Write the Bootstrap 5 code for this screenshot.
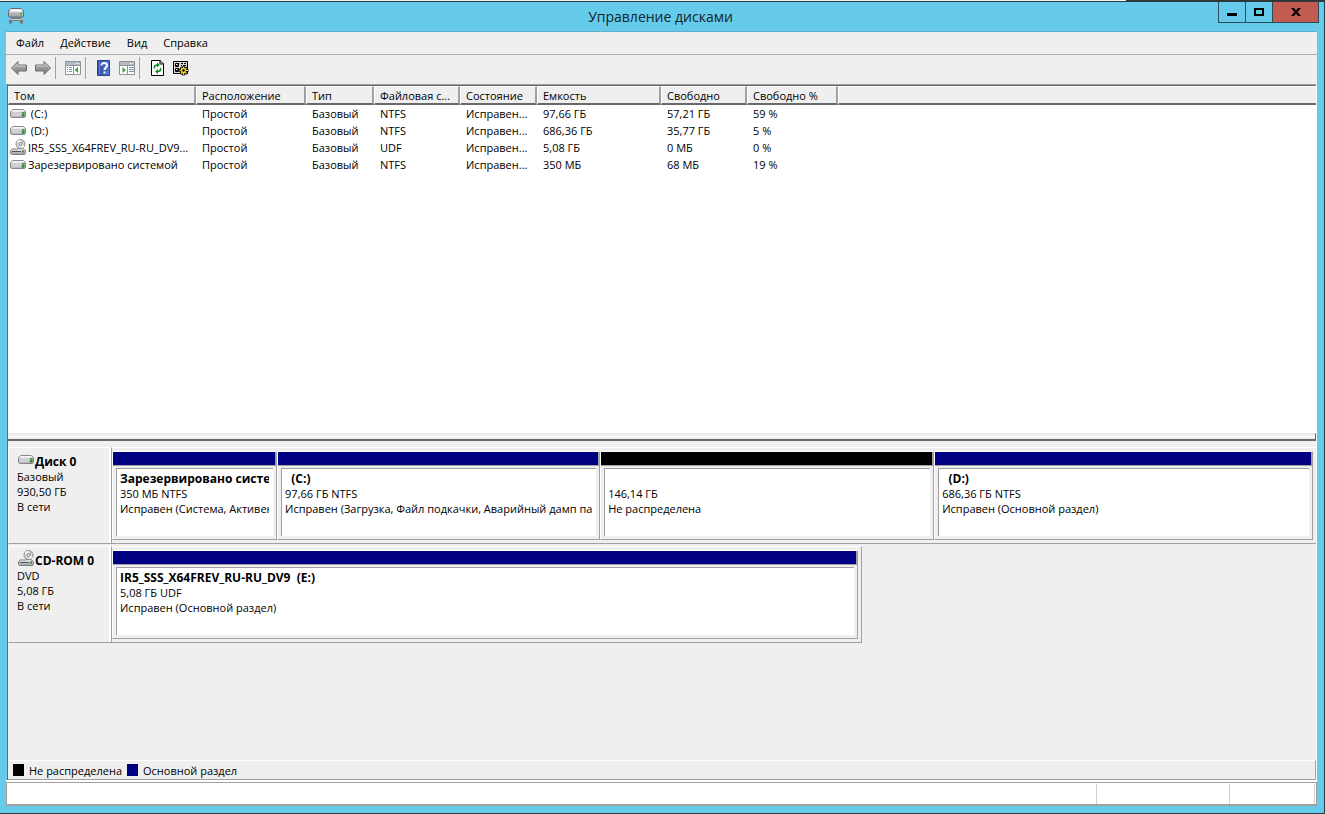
<!DOCTYPE html>
<html lang="ru">
<head>
<meta charset="utf-8">
<meta name="viewport" content="width=device-width, initial-scale=1">
<title>Управление дисками</title>
<link rel="stylesheet" href="https://cdn.jsdelivr.net/npm/bootstrap@5.3.0/dist/css/bootstrap.min.css">
<style>
  :root { --frame: #66cbea; --face: #efefef; --shade: #a0a0a0; --dark: #696969; --navy: #000080; }
  body { font-family: "Open Sans", "Noto Sans", sans-serif; font-size: 11px; line-height: 15px; color: #000; background: #f4f4f4; }
  button { font: inherit; color: inherit; background: none; border: 0; padding: 0; }
  .desktop-edge { height: 1px; background: linear-gradient(90deg, #f4f4f4 85%, #333 85%); }
  .app-window { background: var(--frame); border: 1px solid #2b3b42; border-left: 0; padding: 0 7px 7px 6px; }
  .title-bar { height: 30px; border-bottom: 1px solid #5fb0d0; }
  .title-bar h1 { font-size: 14px; line-height: 30px; padding-left: 77px; color: #10242c; }
  .title-icon { width: 20px; height: 28px; }
  .caption-group { margin-right: -2px; }
  .caption-btn { height: 21px; width: 27px; border: solid #2b4c58; border-width: 0 0 1px 1px; }
  .caption-close { width: 47px; border-right-width: 1px; background: #c25b50; }
  .menu-bar { height: 23px; background: var(--face); border-bottom: 1px solid #a9adb1; padding: 0 0 1px 2px; }
  .menu-bar button { padding: 0 8px; }
  .tool-bar { height: 29px; background: var(--face); padding: 0 0 4px 1px; }
  .tool-bar button { width: 24px; height: 24px; }
  .tool-bar .sep { width: 6px; height: 22px; border-left: 1px solid var(--shade); }
  .panes { background: var(--face); border-left: 1px solid var(--dark); border-right: 1px solid #fff; margin-left: 1px; min-height: 0; }
  .volume-pane { flex: 356 1 0; background: #fff; border-top: 1px solid var(--shade); overflow: hidden; }
  .volume-table { table-layout: fixed; width: 100%; border-collapse: separate; border-spacing: 0; border-top: 1px solid var(--dark); }
  .volume-table th { height: 18px; padding: 1px 5px 0; background: var(--face); font-weight: 400; text-align: left; border: solid; border-width: 1px 2px 2px 1px; border-color: #fff var(--shade) var(--dark) #fff; line-height: 15px; }
  .volume-table th:last-child { border-right: 0; }
  .volume-table td { height: 17px; padding: 0 6px; line-height: 17px; }
  .volume-table td:first-child { padding: 0 2px; }
  .volume-table th, .volume-table td { overflow: hidden; white-space: pre; text-overflow: ellipsis; }
  .c-vol { width: 188px } .c-loc { width: 110px } .c-type { width: 68px } .c-fs { width: 86px }
  .c-state { width: 77px } .c-cap { width: 124px } .c-free { width: 86px } .c-pct { width: 91px }
  .drive { width: 16px; height: 16px; vertical-align: top; margin-right: 2px; }
  .splitter { height: 8px; background: var(--face); border: solid; border-width: 1px 1px 2px 0; border-color: #e3e3e3 var(--dark) var(--dark); }
  .splitter::before { content: ""; display: block; height: 3px; border-bottom: 1px solid #fff; }
  .disk-pane { flex: 340 1 0; padding-top: 6px; min-height: 0; }
  .disk-row { min-height: 97px; margin-bottom: 2px; }
  .disk-label { width: 103px; flex: none; padding: 6px 0 0 8px; border: solid; border-width: 1px 0 1px 1px; border-color: #fff #fff var(--shade); box-shadow: inset -2px 0 0 #fff; }
  .disk-label .drive { margin: -3px 1px 0 1px; }
  .disk-label .fw-bold, .part-body .fw-bold { font-size: 12px; }
  .disk-label .fw-bold { height: 15px; }
  .parts { border: 1px solid var(--shade); border-top-color: #fff; border-right: 0; padding: 3px 3px 3px 0; min-width: 0; flex-basis: 0; }
  .parts.short { border-right: 1px solid var(--shade); }
  .part { flex-basis: 0; min-width: 0; border: 1px solid; border-color: #fff var(--shade) var(--shade) #fff; }
  .part-bar { height: 14px; background: var(--navy); border-bottom: 1px solid var(--shade); border-right: 1px solid var(--shade); }
  .part-bar.free { background: #000; }
  .part-body { margin: 2px 3px 3px; flex: 1; background: #fff; border: solid var(--shade); border-width: 1px 0 0 1px; padding: 2px 4px 0 3px; }
  .part-body div { white-space: pre; overflow: hidden; height: 15px; }
  .legend-bar { height: 20px; border: solid; border-width: 1px 1px 1px 0; border-color: #fff var(--shade) var(--shade); padding-left: 5px; gap: 5px; }
  .swatch { width: 11px; height: 12px; background: #000; }
  .swatch.primary { background: var(--navy); }
  .status-bar { height: 24px; background: #fff; border: 1px solid var(--shade); border-bottom-width: 2px; margin-top: 2px; }
  .status-bar span { border-right: 1px solid #d0d0d0; margin-top: 1px; }
  .s-mid { width: 133px } .s-end { width: 85px; margin-right: 1px }
  .under-panes { background: #fff; }
</style>
</head>
<body>
<svg width="0" height="0" class="position-absolute" aria-hidden="true">
  <defs>
    <linearGradient id="metal" x1="0" y1="0" x2="0" y2="1"><stop offset="0" stop-color="#ececee"/><stop offset="1" stop-color="#9a9ca2"/></linearGradient>
    <linearGradient id="arrow" x1="0" y1="0" x2="0" y2="1"><stop offset="0" stop-color="#b8b8b8"/><stop offset="1" stop-color="#7a7a7a"/></linearGradient>
    <linearGradient id="book" x1="0" y1="0" x2="1" y2="0"><stop offset="0" stop-color="#2b4aa6"/><stop offset="1" stop-color="#5879d2"/></linearGradient>
    <symbol id="hdd" viewBox="0 0 16 16">
      <path d="M3 4.500h10l2.500 2v5l-1 1h-13l-1-1v-5z" fill="url(#metal)" stroke="#85878d"/>
      <path d="M3.200 5h9.600l2 1.500H1.200z" fill="#f8f8f8"/>
      <path d="M1.500 7.500h9.500v4h-9.500z" fill="#d0d1d7"/><path d="M12 7h2.500v4.500H12z" fill="#3b8d32"/><path d="M12.500 8h1v1h-1z" fill="#8be06c"/>
    </symbol>
    <symbol id="optical" viewBox="0 0 16 16">
      <path d="M3 9.500h10l2.500 2v3l-1 1h-13l-1-1v-3z" fill="url(#metal)" stroke="#7c7e84"/>
      <path d="M2 12.500h9" stroke="#55575c"/><path d="M12 11.500h2v2h-2z" fill="#3b8d32"/>
      <circle cx="10.500" cy="5" r="4.500" fill="#d9dadc" stroke="#8c8e92"/>
      <path d="M10.500 5L7 2.500A5 5 0 0 1 10 1zM10.500 5l4 2.500a5 5 0 0 1-3 1.500z" fill="#f9f9f9"/>
      <path d="M10.500 5L13 1.500l1 2z" fill="#a3c49b"/>
      <circle cx="10.500" cy="5" r="1.500" fill="#fff" stroke="#77797d"/>
      <path d="M3 9h5v2H3z" fill="#b5b7bb"/>
    </symbol>
    <symbol id="left" viewBox="0 0 16 16"><path d="M.5 8L7 1.500v3.500h8.500v6H7v3.500z" fill="url(#arrow)" stroke="#6c6c6c"/><path d="M2 8l4-4v2h8.500" fill="none" stroke="#cfcfcf"/></symbol>
  </defs>
</svg>

<div class="d-flex flex-column vh-100">
  <div class="desktop-edge"></div>
  <div class="app-window d-flex flex-column flex-grow-1">
    <header class="title-bar d-flex align-items-start flex-shrink-0">
      <span class="title-icon d-flex align-items-center justify-content-center">
        <svg width="16" height="16" viewBox="0 0 16 16" aria-hidden="true">
          <path d="M3 .5h10l2.500 2.500v5l-1 1h-13l-1-1V3z" fill="url(#metal)" stroke="#66696e"/><path d="M3 1.500h10l1.500 2h-13z" fill="#fafafa"/>
          <path d="M2 6h9" stroke="#a4a6aa"/><path d="M12 4.500h2v3h-2z" fill="#59b136"/>
          <path d="M2.500 9.500h11v1.500h-11zM1 11h14v4.500h-3V13H4v2.500H1z" fill="#74777c"/><path d="M1.500 11.500h13" stroke="#d0d2d5"/>
        </svg>
      </span>
      <h1 class="flex-grow-1 text-center m-0 fw-normal">Управление дисками</h1>
      <div class="caption-group d-flex" role="group" aria-label="Окно">
        <button type="button" class="caption-btn d-flex align-items-center justify-content-center" aria-label="Свернуть"><svg width="10" height="10"><path d="M0 6h10v3H0z"/></svg></button>
        <button type="button" class="caption-btn d-flex align-items-center justify-content-center" aria-label="Развернуть"><svg width="10" height="8"><path d="M1 1h8v6H1z" fill="none" stroke="#000" stroke-width="2"/></svg></button>
        <button type="button" class="caption-btn caption-close d-flex align-items-center justify-content-center" aria-label="Закрыть"><svg width="10" height="8"><path d="M0 0h3l2 2.500L7 0h3L6.500 4 10 8H7L5 5.500 3 8H0l3.500-4z"/></svg></button>
      </div>
    </header>
    <nav class="menu-bar d-flex align-items-center flex-shrink-0">
      <button type="button">Файл</button><button type="button">Действие</button><button type="button">Вид</button><button type="button">Справка</button>
    </nav>
    <div class="tool-bar d-flex align-items-center flex-shrink-0" role="toolbar" aria-label="Инструменты">
      <button type="button" class="d-flex align-items-center justify-content-center" aria-label="Назад"><svg width="16" height="16"><use href="#left"/></svg></button>
      <button type="button" class="d-flex align-items-center justify-content-center" aria-label="Вперед"><svg width="16" height="16"><g transform="matrix(-1 0 0 1 16 0)"><use href="#left" width="16" height="16"/></g></svg></button>
      <span class="sep"></span>
      <button type="button" class="d-flex align-items-center justify-content-center" aria-label="Дерево консоли"><svg width="16" height="14" viewBox="0 0 16 14"><path d="M.5 .5h15v13H.5z" fill="#fff" stroke="#8c939d"/><path d="M1 1h14v3H1z" fill="#b6bcc6"/><path d="M11 2.500h1M13 2.500h1" stroke="#fff"/><path d="M0 4.500h16M8.500 5v8.500" stroke="#8c939d"/><path d="M2 6.500h5M2 8.500h5M2 10.500h5" stroke="#7f8ea6"/><path d="M3.500 5v8" stroke="#fff"/><path d="M13 6v6L9.500 9z" fill="#3fa535"/></svg></button>
      <span class="sep"></span>
      <button type="button" class="d-flex align-items-center justify-content-center" aria-label="Справка"><svg width="13" height="16" viewBox="0 0 13 16"><path d="M.5 .5h12v15H.5z" fill="url(#book)" stroke="#27448f"/><path d="M2.500 1v14" stroke="#6b87d4"/><path d="M4.500 5.500C4.500 2 10 2.200 10 5.500c0 2.200-2.500 2-2.500 4.500" fill="none" stroke="#fff" stroke-width="2"/><path d="M6.500 11.500h2v2h-2z" fill="#fff"/></svg></button>
      <button type="button" class="d-flex align-items-center justify-content-center" aria-label="Панель действий"><svg width="16" height="14" viewBox="0 0 16 14"><path d="M.5 .5h15v13H.5z" fill="#fff" stroke="#8c939d"/><path d="M1 1h14v3H1z" fill="#b6bcc6"/><path d="M11 2.500h1M13 2.500h1" stroke="#fff"/><path d="M0 4.500h16M8.500 5v8.500" stroke="#8c939d"/><path d="M10 6.500h5M10 8.500h5M10 10.500h5" stroke="#7f8ea6"/><path d="M3.500 6v6L7 9z" fill="#3fa535"/></svg></button>
      <span class="sep"></span>
      <button type="button" class="d-flex align-items-center justify-content-center" aria-label="Обновить"><svg width="13" height="16" viewBox="0 0 13 16"><path d="M.5 .5h8.500l3.500 3.500v11.500H.5z" fill="#fff" stroke="#000"/><path d="M9 0v4h4" fill="none" stroke="#000"/><path d="M3.500 8.500V7q0-2 3-2M9.500 8v1.500q0 2-3 2" fill="none" stroke="#0a8a24" stroke-width="1.500"/><path d="M6 2.500v5L9 5zM7 9v5l-3-2.500z" fill="#0a8a24"/></svg></button>
      <button type="button" class="d-flex align-items-center justify-content-center" aria-label="Свойства"><svg width="16" height="16" viewBox="0 0 16 16"><path d="M.5 1.500h14v12H.5z" fill="#d8d8d8" stroke="#000"/><path d="M2.500 3.500h3v3h-3zM2.500 8.500h3v3h-3z" fill="#fff" stroke="#000"/><path d="M3 5l1 1 2-3M3 10l1 1 2-3M8 3.500h2M11 3.500h2M8 5.500h1M10 5.500h3" fill="none" stroke="#000"/><path d="M10.500 6v9.500M6 10.500h9.500M7.500 7.500l6.500 6.500M14 7.500L7.500 14" stroke="#000" stroke-width="2.500"/><path d="M10.500 6.500V15M6.500 10.500H15M8 8l5.500 5.500M13.500 8L8 13.500" stroke="#f2dc1e" stroke-width="1.200"/><circle cx="10.500" cy="10.500" r="2.500" fill="#f2dc1e"/><circle cx="10.500" cy="10.500" r="1.200"/></svg></button>
    </div>

    <main class="panes d-flex flex-column flex-grow-1">
      <section class="volume-pane">
        <table class="volume-table">
          <colgroup><col class="c-vol"><col class="c-loc"><col class="c-type"><col class="c-fs"><col class="c-state"><col class="c-cap"><col class="c-free"><col class="c-pct"><col></colgroup>
          <thead><tr><th>Том</th><th>Расположение</th><th>Тип</th><th>Файловая с...</th><th>Состояние</th><th>Емкость</th><th>Свободно</th><th>Свободно %</th><th></th></tr></thead>
          <tbody>
            <tr><td><svg class="drive"><use href="#hdd"/></svg> (C:)</td><td>Простой</td><td>Базовый</td><td>NTFS</td><td>Исправен...</td><td>97,66 ГБ</td><td>57,21 ГБ</td><td>59 %</td><td></td></tr>
            <tr><td><svg class="drive"><use href="#hdd"/></svg> (D:)</td><td>Простой</td><td>Базовый</td><td>NTFS</td><td>Исправен...</td><td>686,36 ГБ</td><td>35,77 ГБ</td><td>5 %</td><td></td></tr>
            <tr><td><svg class="drive"><use href="#optical"/></svg>IR5_SSS_X64FREV_RU-RU_DV9...</td><td>Простой</td><td>Базовый</td><td>UDF</td><td>Исправен...</td><td>5,08 ГБ</td><td>0 МБ</td><td>0 %</td><td></td></tr>
            <tr><td><svg class="drive"><use href="#hdd"/></svg>Зарезервировано системой</td><td>Простой</td><td>Базовый</td><td>NTFS</td><td>Исправен...</td><td>350 МБ</td><td>68 МБ</td><td>19 %</td><td></td></tr>
          </tbody>
        </table>
      </section>
      <div class="splitter flex-shrink-0"></div>
      <section class="disk-pane d-flex flex-column">
        <div class="disk-row d-flex">
          <div class="disk-label">
            <div class="fw-bold"><svg class="drive"><use href="#hdd"/></svg>Диск 0</div>
            <div>Базовый</div><div>930,50 ГБ</div><div>В сети</div>
          </div>
          <div class="parts d-flex flex-grow-1">
            <article class="part d-flex flex-column" style="flex-grow:164"><div class="part-bar"></div><div class="part-body"><div class="fw-bold">Зарезервировано системой</div><div>350 МБ NTFS</div><div>Исправен (Система, Активен)</div></div></article>
            <article class="part d-flex flex-column" style="flex-grow:323"><div class="part-bar"></div><div class="part-body"><div class="fw-bold">  (C:)</div><div>97,66 ГБ NTFS</div><div>Исправен (Загрузка, Файл подкачки, Аварийный дамп памяти)</div></div></article>
            <article class="part d-flex flex-column" style="flex-grow:334"><div class="part-bar free"></div><div class="part-body"><div></div><div>146,14 ГБ</div><div>Не распределена</div></div></article>
            <article class="part d-flex flex-column" style="flex-grow:379"><div class="part-bar"></div><div class="part-body"><div class="fw-bold">  (D:)</div><div>686,36 ГБ NTFS</div><div>Исправен (Основной раздел)</div></div></article>
          </div>
        </div>
        <div class="disk-row d-flex">
          <div class="disk-label">
            <div class="fw-bold"><svg class="drive"><use href="#optical"/></svg>CD-ROM 0</div>
            <div>DVD</div><div>5,08 ГБ</div><div>В сети</div>
          </div>
          <div class="parts short d-flex" style="flex-grow:0.622">
            <article class="part d-flex flex-column flex-grow-1"><div class="part-bar"></div><div class="part-body"><div class="fw-bold">IR5_SSS_X64FREV_RU-RU_DV9  (E:)</div><div>5,08 ГБ UDF</div><div>Исправен (Основной раздел)</div></div></article>
          </div>
        </div>
        <footer class="legend-bar d-flex align-items-center mt-auto">
          <span class="swatch"></span><span>Не распределена</span>
          <span class="swatch primary"></span><span>Основной раздел</span>
        </footer>
      </section>
    </main>
    <div class="under-panes flex-shrink-0">
      <div class="status-bar d-flex"><span class="flex-grow-1"></span><span class="s-mid"></span><span class="s-end"></span></div>
    </div>
  </div>
</div>
<script src="https://cdn.jsdelivr.net/npm/bootstrap@5.3.0/dist/js/bootstrap.bundle.min.js"></script>
</body>
</html>
